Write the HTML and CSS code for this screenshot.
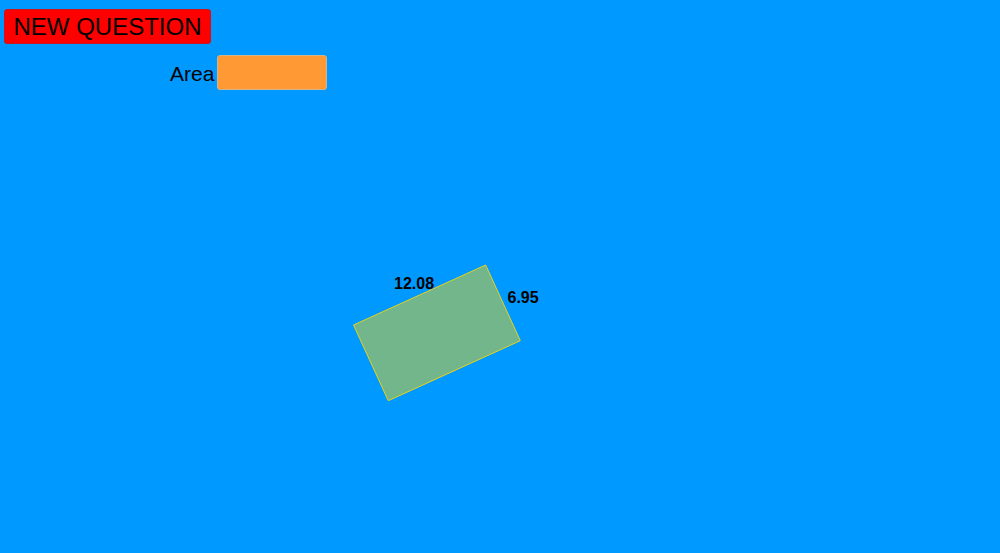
FILE: index.html
```html
<!DOCTYPE html>
<html>
<head>
<meta charset="utf-8">
<link rel="stylesheet" href="styles.css">
</head>
<body>
<div class="page">
  <button class="new-btn">NEW QUESTION</button>
  <div class="area-row">
    <label class="area-label" for="area">Area</label>
    <input id="area" class="area-input" type="text">
  </div>
  <svg class="canvas" width="1000" height="553" viewBox="0 0 1000 553">
    <polygon class="shape" points="353.5,325 485.7,265 520.3,340.7 388.3,400.7"/>
    <text class="dim" x="394" y="289">12.08</text>
    <text class="dim" x="507.5" y="302.5">6.95</text>
  </svg>
</div>
</body>
</html>
```
FILE: styles.css
```css
html, body {
  margin: 0;
  padding: 0;
  height: 100%;
  background: #0099ff;
  overflow: hidden;
}
.page {
  position: relative;
  width: 1000px;
  height: 553px;
  padding: 9px 0 0 4px;
  box-sizing: border-box;
  font-family: "Liberation Sans", Arial, sans-serif;
}
.new-btn {
  display: block;
  height: 35px;
  width: 207px;
  padding: 0;
  margin: 0;
  background: #ff0000;
  border: 1px solid #c8141e;
  border-radius: 3px;
  font-family: "Liberation Sans", Arial, sans-serif;
  font-size: 24px;
  line-height: 32px;
  color: #000;
  text-align: center;
}
.area-row {
  display: flex;
  align-items: center;
  margin-top: 11px;
  padding-left: 166px;
  gap: 3px;
}
.area-label {
  font-size: 21px;
  color: #000;
  padding-top: 2px;
}
.area-input {
  width: 110px;
  height: 35px;
  box-sizing: border-box;
  background: #ff9933;
  border: 1px solid #d2b48c;
  border-radius: 3px;
  padding: 0;
  margin: 0;
}
.canvas {
  position: absolute;
  left: 0;
  top: 0;
  pointer-events: none;
}
.shape {
  fill: #74b68c;
  stroke: #e8d219;
  stroke-width: 1;
}
.dim {
  font-family: "Liberation Sans", Arial, sans-serif;
  font-weight: bold;
  font-size: 16px;
  fill: #000;
}
```
